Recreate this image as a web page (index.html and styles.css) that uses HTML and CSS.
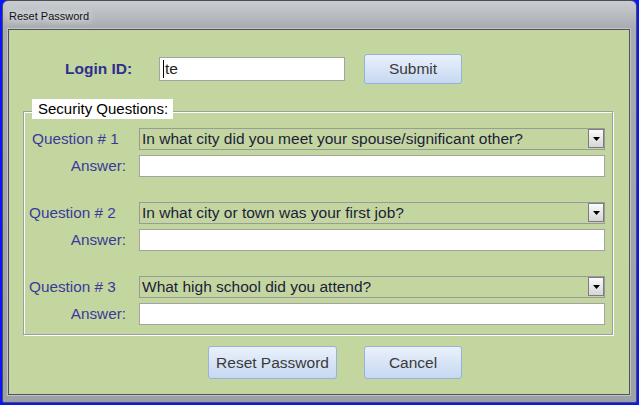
FILE: index.html
```html
<!DOCTYPE html>
<html lang="en">
<head>
    <meta charset="UTF-8">
    <title>Reset Password</title>
    <link rel="stylesheet" href="styles.css">
</head>
<body>

    <div class="window">
        <div class="titlebar">
            <span class="title">Reset Password</span>
        </div>

        <div class="client">
            <form class="reset-form">
                <!-- Login -->
                <div class="login-row">
                    <label class="login-label" for="login">Login ID:</label>
                    <div class="textbox" id="login"><span class="caret"></span>te</div>
                    <button type="button" class="btn btn-submit">Submit</button>
                </div>

                <!-- Security questions -->
                <div class="group">
                    <div class="group-title">Security Questions:</div>

                    <div class="qa">
                        <span class="q-label q-first">Question # 1</span>
                        <div class="select">
                            <span class="select-text">In what city did you meet your spouse/significant other?</span>
                            <span class="drop"><svg width="7" height="4" viewBox="0 0 7 4"><path d="M0 0H7L3.5 4Z" fill="#000"/></svg></span>
                        </div>
                        <span class="a-label">Answer:</span>
                        <input type="text" class="answer">
                    </div>

                    <div class="qa">
                        <span class="q-label">Question # 2</span>
                        <div class="select">
                            <span class="select-text">In what city or town was your first job?</span>
                            <span class="drop"><svg width="7" height="4" viewBox="0 0 7 4"><path d="M0 0H7L3.5 4Z" fill="#000"/></svg></span>
                        </div>
                        <span class="a-label">Answer:</span>
                        <input type="text" class="answer">
                    </div>

                    <div class="qa">
                        <span class="q-label">Question # 3</span>
                        <div class="select">
                            <span class="select-text">What high school did you attend?</span>
                            <span class="drop"><svg width="7" height="4" viewBox="0 0 7 4"><path d="M0 0H7L3.5 4Z" fill="#000"/></svg></span>
                        </div>
                        <span class="a-label">Answer:</span>
                        <input type="text" class="answer">
                    </div>
                </div>

                <div class="actions">
                    <button type="button" class="btn btn-reset">Reset Password</button>
                    <button type="button" class="btn btn-cancel">Cancel</button>
                </div>
            </form>
        </div>
    </div>

</body>
</html>
```

FILE: styles.css
```css
* {
    box-sizing: border-box;
}
body {
    margin: 0;
    background: #0a14ff;
    font-family: "Liberation Sans", Arial, sans-serif;
    height: 405px;
    overflow: hidden;
}
.window {
    margin-left: 2px;
    width: 635px;
    height: 403px;
    border: 1px solid #4b4e53;
    border-radius: 6px 6px 2px 2px;
    background: linear-gradient(#c9ccd1 0px, #a7abb0 28px, #9da1a6 100%);
    padding: 0 6px 7px 5px;
    display: flex;
    flex-direction: column;
}
.titlebar {
    height: 28px;
    flex: none;
    display: flex;
    align-items: center;
    padding-left: 1px;
    padding-top: 2px;
}
.title {
    font-size: 11px;
    color: #111;
    text-shadow: 0 0 6px #eceef0, 0 0 10px #eceef0;
}
.client {
    flex: 1;
    border: 1px solid #50545a;
    box-shadow: 0 0 0 1px #c0c3c7;
    background: #c4d69f;
}
.reset-form {
    margin: 0;
    display: flex;
    flex-direction: column;
}
.login-row {
    display: flex;
    align-items: center;
    margin-top: 24px;
    padding-left: 56px;
    height: 30px;
}
.login-label {
    width: 94px;
    font-size: 15.5px;
    font-weight: bold;
    color: #2f2f8f;
}
.textbox {
    width: 186px;
    height: 24px;
    background: #fff;
    border: 1px solid #a3a3a3;
    font-size: 15.5px;
    color: #222;
    display: flex;
    align-items: center;
    padding-left: 3px;
}
.caret {
    width: 1px;
    height: 18px;
    background: #000;
    margin-right: 1px;
}
.btn {
    font-family: "Liberation Sans", Arial, sans-serif;
    font-size: 15.5px;
    color: #3a3a3a;
    background: linear-gradient(#eaf1fb, #c6d8f1);
    border: 1px solid #97b3da;
    border-radius: 3px;
    padding: 0;
    cursor: pointer;
}
.btn-submit {
    width: 98px;
    height: 30px;
    margin-left: 19px;
}
.group {
    position: relative;
    margin: 27px 0 0 14px;
    width: 590px;
    height: 224px;
    border: 1px solid #9c9fa0;
    box-shadow: 1px 1px 0 #fff, inset 1px 1px 0 #fff;
    padding-top: 16px;
}
.group-title {
    position: absolute;
    left: 8px;
    top: -13px;
    width: 141px;
    height: 20px;
    background: #fff;
    font-size: 15px;
    color: #000;
    padding: 1px 0 0 6px;
}
.qa {
    display: grid;
    grid-template-columns: 115px 466px;
    grid-template-rows: 22px 22px;
    row-gap: 5px;
    align-items: center;
    margin-bottom: 25px;
}
.q-label {
    font-size: 15.3px;
    color: #3a3a9c;
    padding-left: 5px;
}
.q-first {
    padding-left: 8px;
}
.a-label {
    font-size: 15.3px;
    color: #3a3a9c;
    text-align: right;
    padding-right: 13px;
}
.select {
    height: 22px;
    border: 1px solid #9a9a9a;
    display: flex;
    align-items: center;
    padding: 0 0 1px 2px;
}
.select-text {
    flex: 1;
    font-size: 15.5px;
    color: #1c1c3c;
}
.drop {
    width: 16px;
    height: 19px;
    border: 1px solid #7c7c7c;
    background: linear-gradient(#fbfbfb, #d6d6d6);
    display: flex;
    align-items: center;
    justify-content: center;
    align-self: flex-start;
}
.answer {
    height: 22px;
    border: 1px solid #a3a3a3;
    background: #fff;
    margin: 0;
    padding: 0 3px;
    font-size: 15px;
    outline: none;
}
.actions {
    display: flex;
    gap: 27px;
    padding-left: 199px;
    margin-top: 11px;
}
.btn-reset {
    width: 129px;
    height: 33px;
}
.btn-cancel {
    width: 98px;
    height: 33px;
}
```
